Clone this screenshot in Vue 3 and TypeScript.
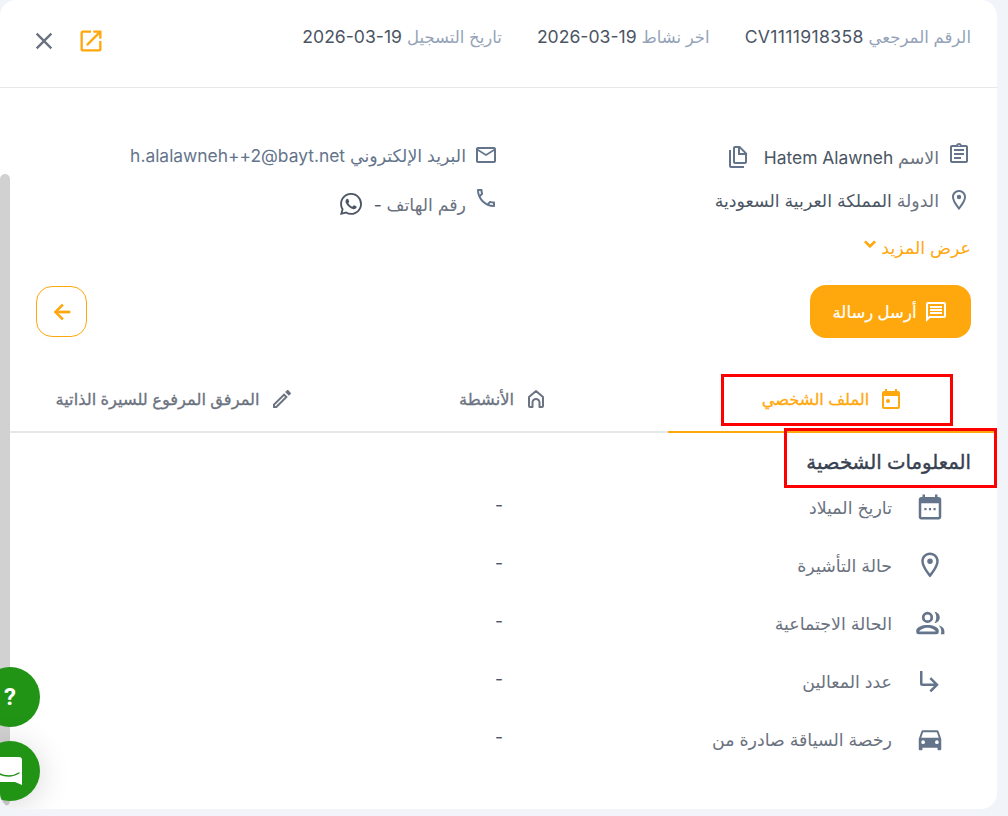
<script setup lang="ts">
interface Row { label: string; icon: string }
const meta = [
  { label: 'الرقم المرجعي', value: 'CV1111918358' },
  { label: 'اخر نشاط', value: '2026-03-19' },
  { label: 'تاريخ التسجيل', value: '2026-03-19' },
]
const rows: Row[] = [
  { label: 'تاريخ الميلاد', icon: 'M19 4h-1V2h-2v2H8V2H6v2H5C3.9 4 3 4.9 3 6v14c0 1.1.9 2 2 2h14c1.100 0 2-.9 2-2V6c0-1.100-.9-2-2-2zm0 16H5V9h14v11zM7.500 12.800h1.700v1.700H7.500zm3.650 0h1.700v1.700h-1.700zm3.650 0h1.700v1.700h-1.700z' },
  { label: 'حالة التأشيرة', icon: 'M12 2C8.130 2 5 5.130 5 9c0 5.250 7 13 7 13s7-7.750 7-13c0-3.870-3.130-7-7-7zM7 9c0-2.760 2.240-5 5-5s5 2.240 5 5c0 2.880-2.880 7.190-5 9.880C9.920 16.210 7 11.850 7 9zm5-2.200a2.200 2.200 0 1 0 0 4.400 2.200 2.200 0 0 0 0-4.400z' },
  { label: 'الحالة الاجتماعية', icon: 'M10 3a4.500 4.500 0 1 0 0 9 4.500 4.500 0 0 0 0-9zm0 2.200a2.300 2.300 0 1 1 0 4.600 2.300 2.300 0 0 1 0-4.600zM10 13.500c-4 0-9 1.600-9 4.500v1a2 2 0 0 0 2 2h14a2 2 0 0 0 2-2v-1c0-2.900-5-4.500-9-4.500zM3.400 18.800c.5-1.300 3.900-3 6.600-3s6.100 1.700 6.600 3zM15.500 3c2.500.2 4.300 2.200 4.300 4.500s-1.800 4.300-4.300 4.500c1-1.200 1.500-2.800 1.500-4.500S16.500 4.200 15.500 3zM19 14c2.500.6 4.500 2 4.500 4.500V21h-3c.3-.5.5-1.300.5-2.500 0-1.800-.8-3.300-2-4.500z' },
  { label: 'عدد المعالين', icon: 'M19 15l-6 6-1.420-1.420L15.170 16H6a2 2 0 0 1-2-2V4h2v10h9.170l-3.590-3.580L13 9l6 6z' },
  { label: 'رخصة السياقة صادرة من', icon: 'M18.920 6.010C18.720 5.420 18.160 5 17.500 5h-11c-.66 0-1.210.42-1.420 1.010L3 12v8c0 .55.45 1 1 1h1c.55 0 1-.45 1-1v-1h12v1c0 .55.45 1 1 1h1c.55 0 1-.45 1-1v-8l-2.080-5.990zM6.500 16a1.500 1.500 0 1 1 0-3 1.500 1.500 0 0 1 0 3zm11 0a1.500 1.500 0 1 1 0-3 1.500 1.500 0 0 1 0 3zM5 11l1.500-4.500h11L19 11H5z' },
]
</script>

<template>
  <div class="page" dir="rtl">
    <main class="card">
      <header class="top">
        <div class="meta">
          <span v-for="m in meta" :key="m.label"><span class="meta-l">{{ m.label }}</span> <bdi class="meta-v" dir="ltr">{{ m.value }}</bdi></span>
        </div>
        <div class="top-actions">
          <svg class="i-open" viewBox="0 0 24 24"><path d="M19 19H5V5h7V3H5c-1.11 0-2 .9-2 2v14c0 1.1.89 2 2 2h14c1.1 0 2-.9 2-2v-7h-2v7zM14 3v2h3.59l-9.83 9.83 1.41 1.41L19 6.41V10h2V3h-7z"/></svg>
          <svg class="i-close" viewBox="0 0 24 24"><path d="M19 6.41 17.59 5 12 10.59 6.41 5 5 6.41 10.59 12 5 17.59 6.41 19 12 13.41 17.59 19 19 17.59 13.41 12z"/></svg>
        </div>
      </header>

      <div class="scroller">
        <div class="content">
          <section class="info">
            <div class="info-col first">
              <div class="info-row">
                <svg class="ic raise" viewBox="0 0 24 24"><path d="M19 3h-4.18C14.4 1.84 13.3 1 12 1s-2.4.84-2.82 2H5c-1.1 0-2 .9-2 2v14c0 1.1.9 2 2 2h14c1.1 0 2-.9 2-2V5c0-1.1-.9-2-2-2zm-7-.25c.41 0 .75.34.75.75s-.34.75-.75.75-.75-.34-.75-.75.34-.75.75-.75zM19 19H5V5h14v14zM7 15h7v2H7zm0-4h10v2H7zm0-4h10v2H7z"/></svg>
                <span class="txt"><span class="lbl">الاسم</span> Hatem Alawneh</span>
                <svg class="ic copy" viewBox="0 0 24 24"><path d="M3 5v16c0 1.100.9 2 2 2h13v-2H5V5H3z"/><path d="M14 1H9c-1.100 0-2 .9-2 2v14c0 1.100.9 2 2 2h10c1.100 0 2-.9 2-2V8l-7-7zm0 2.800L18.200 8H14V3.800zM9 17V3h3v7h7v7H9z"/></svg>
              </div>
              <div class="info-row">
                <svg class="ic" viewBox="0 0 24 24"><path d="M12 2C8.13 2 5 5.13 5 9c0 5.25 7 13 7 13s7-7.75 7-13c0-3.87-3.13-7-7-7zM7 9c0-2.76 2.24-5 5-5s5 2.24 5 5c0 2.88-2.88 7.19-5 9.88C9.92 16.21 7 11.85 7 9zm5-2.2a2.200 2.200 0 1 0 0 4.400 2.200 2.200 0 0 0 0-4.400z"/></svg>
                <span class="txt"><span class="lbl">الدولة</span> المملكة العربية السعودية</span>
              </div>
            </div>
            <div class="info-col second">
              <div class="info-row">
                <svg class="ic" viewBox="0 0 24 24"><path d="M20 4H4c-1.1 0-1.99.9-1.99 2L2 18c0 1.1.9 2 2 2h16c1.1 0 2-.9 2-2V6c0-1.1-.9-2-2-2zm0 14H4V8l8 5 8-5v10zm-8-7L4 6h16l-8 5z"/></svg>
                <span class="txt blue-t"><span class="lbl-b">البريد الإلكتروني</span> h.alalawneh++2@bayt.net</span>
              </div>
              <div class="info-row">
                <svg class="ic phone" viewBox="0 0 24 24"><path d="M6.54 5c.06.89.21 1.76.45 2.59l-1.2 1.2c-.41-1.2-.67-2.47-.76-3.79h1.51m9.86 12.02c.85.24 1.72.39 2.6.45v1.49c-1.32-.09-2.59-.35-3.8-.75l1.2-1.19M7.5 3H4c-.55 0-1 .45-1 1 0 9.39 7.61 17 17 17 .55 0 1-.45 1-1v-3.49c0-.55-.45-1-1-1-1.24 0-2.45-.2-3.57-.57-.1-.04-.21-.05-.31-.05-.26 0-.51.1-.71.29l-2.2 2.2c-2.83-1.45-5.15-3.76-6.59-6.59l2.2-2.2c.28-.28.36-.67.25-1.02C8.7 6.45 8.5 5.25 8.5 4c0-.55-.45-1-1-1z"/></svg>
                <span class="txt"><span class="lbl">رقم الهاتف</span> -</span>
                <svg class="ic wa" viewBox="0 0 24 24"><path d="M17.472 14.382c-.297-.149-1.758-.867-2.03-.967-.273-.099-.471-.148-.67.15-.197.297-.767.966-.94 1.164-.173.199-.347.223-.644.075-.297-.15-1.255-.463-2.39-1.475-.883-.788-1.48-1.761-1.653-2.059-.173-.297-.018-.458.13-.606.134-.133.298-.347.446-.52.149-.174.198-.298.298-.497.099-.198.05-.371-.025-.52-.075-.149-.669-1.612-.916-2.207-.242-.579-.487-.5-.669-.51-.173-.008-.371-.01-.57-.01-.198 0-.52.074-.792.372-.272.297-1.04 1.016-1.04 2.479 0 1.462 1.065 2.875 1.213 3.074.149.198 2.096 3.2 5.077 4.487.709.306 1.262.489 1.694.625.712.227 1.36.195 1.871.118.571-.085 1.758-.719 2.006-1.413.248-.694.248-1.289.173-1.413-.074-.124-.272-.198-.57-.347m-5.421 7.403h-.004a9.87 9.87 0 01-5.031-1.378l-.361-.214-3.741.982.998-3.648-.235-.374a9.86 9.86 0 01-1.51-5.26c.001-5.45 4.436-9.884 9.888-9.884 2.64 0 5.122 1.03 6.988 2.898a9.825 9.825 0 012.893 6.994c-.003 5.45-4.437 9.884-9.885 9.884m8.413-18.297A11.815 11.815 0 0012.05 0C5.495 0 .16 5.335.157 11.892c0 2.096.547 4.142 1.588 5.945L.057 24l6.305-1.654a11.882 11.882 0 005.683 1.448h.005c6.554 0 11.89-5.335 11.893-11.893a11.821 11.821 0 00-3.48-8.413z"/></svg>
              </div>
            </div>
          </section>

          <div class="more">عرض المزيد <svg viewBox="0 0 24 24"><path d="M16.59 8.59 12 13.17 7.41 8.59 6 10l6 6 6-6z"/></svg></div>

          <div class="actions">
            <button class="send" type="button">
              <svg viewBox="0 0 24 24"><path d="M20 2H4c-1.1 0-2 .9-2 2v18l4-4h14c1.1 0 2-.9 2-2V4c0-1.1-.9-2-2-2zm0 14H5.17L4 17.17V4h16v12zM6 12h12v2H6zm0-3h12v2H6zm0-3h12v2H6z"/></svg>
              أرسل رسالة
            </button>
            <button class="back" type="button" aria-label="back">
              <svg viewBox="0 0 24 24"><path d="M20 11H7.83l5.59-5.59L12 4l-8 8 8 8 1.41-1.41L7.83 13H20v-2z"/></svg>
            </button>
          </div>

          <nav class="tabs">
            <div class="tab active">
              <span class="mark mark-tab"></span>
              <svg viewBox="0 0 24 24"><path d="M19 4h-1V2h-2v2H8V2H6v2H5C3.9 4 3 4.9 3 6v14c0 1.1.9 2 2 2h14c1.1 0 2-.9 2-2V6c0-1.1-.9-2-2-2zm0 16H5V9h14v11zM9 12a2 2 0 1 0 0 4 2 2 0 0 0 0-4z"/></svg>
              الملف الشخصي
            </div>
            <div class="tab">
              <svg viewBox="0 0 24 24"><path class="line" d="M5 10l7-6 7 6v9a1 1 0 0 1-1 1h-2.500v-4.500a3.500 3.500 0 0 0-7 0V20H6a1 1 0 0 1-1-1z"/></svg>
              الأنشطة
            </div>
            <div class="tab">
              <svg viewBox="0 0 24 24"><path d="M3 17.25V21h3.75L17.81 9.94l-3.75-3.75L3 17.25zM5.92 19H5v-.92l9.06-9.06.92.92L5.92 19zM20.71 7.04c.39-.39.39-1.02 0-1.41l-2.34-2.34c-.39-.39-1.02-.39-1.41 0l-1.83 1.83 3.75 3.75 1.83-1.83z"/></svg>
              المرفق المرفوع للسيرة الذاتية
            </div>
          </nav>

          <section class="personal">
            <h2 class="heading"><span class="mark mark-head"></span>المعلومات الشخصية</h2>
            <div v-for="r in rows" :key="r.label" class="row">
              <svg class="row-ic" viewBox="0 0 24 24"><path fill-rule="evenodd" :d="r.icon"/></svg>
              <span class="row-l">{{ r.label }}</span>
              <span class="row-v">-</span>
            </div>
          </section>
        </div>
        <div class="bar"><div class="thumb"></div></div>
      </div>
      <button class="fab help" type="button">?</button>
      <button class="fab chat" type="button" aria-label="chat">
        <svg viewBox="0 0 32 32"><path d="M-2 2H25a3 3 0 0 1 3 3V30l-7-3H-2z" fill="#fff"/><path d="M4 18c6 4 15 4 21 0" fill="none" stroke="#219315" stroke-width="1.4" stroke-linecap="round"/></svg>
      </button>
    </main>
  </div>
</template>

<style>
html, body { margin: 0; background: #f1f5f9; }
</style>

<style scoped>
.page {
  width: 1008px;
  height: 816px;
  overflow: hidden;
  background: #f1f5f9;
  font-family: Inter, "Noto Sans", "DejaVu Sans", sans-serif;
  font-size: 17.4px;
  color: #4b5563;
  direction: rtl;
}
.card {
  position: relative;
  width: 997px;
  height: 809px;
  margin-right: auto;
  background: #fff;
  border-radius: 16px;
  overflow: hidden;
  display: flex;
  flex-direction: column;
}
.top {
  height: 88px;
  box-sizing: border-box;
  border-bottom: 1px solid #e5e7eb;
  padding: 0 26px 0 30px;
  display: flex;
  justify-content: space-between;
}
.meta { display: flex; gap: 35px; padding-top: 26px; line-height: 22px; font-size: 17.6px; }
.meta-l { color: #94a3b8; font-size: 16.5px; }
.meta-v { color: #4b5563; }
.meta > span:first-child .meta-v { letter-spacing: 0.33px; }
.top-actions { display: flex; align-items: center; gap: 19px; padding-bottom: 6px; }
.top-actions svg { width: 28px; height: 28px; }
.i-open { fill: #ffa80d; }
.i-close { fill: #6b7280; }
.scroller { flex: 1; display: flex; min-height: 0; }
.content { flex: 1; min-width: 0; }
.bar { width: 10px; flex: none; }
.thumb { margin-top: 86px; height: 632px; background: #d1d1d1; border-radius: 5px; }
.info { padding: 55px 26px 0; display: flex; }
.info-col { width: 473px; display: flex; flex-direction: column; gap: 21px; }
.first { padding-top: 2px; gap: 19px; }
.second { flex: 1; }
.second .info-row + .info-row { margin-top: 4px; }
.info-row { display: flex; align-items: center; gap: 8px; height: 24px; }
.ic { width: 24px; height: 24px; fill: #64748b; flex: none; }
.raise { margin-top: -6px; }
.phone { margin-top: -12px; }
.copy { margin-right: 6px; }
.wa { width: 22px; height: 22px; margin-right: 4px; fill: #4b5563; }
.txt { color: #4b5563; }
.lbl { color: #6b7280; }
.lbl-b, .blue-t { color: #64748b; }
.more {
  margin-top: 20px;
  padding: 0 26px;
  color: #ffa80d;
  display: flex;
  align-items: center;
  gap: 0;
  line-height: 24px;
}
.more svg { width: 22px; height: 22px; fill: #ffa80d; stroke: #ffa80d; stroke-width: 1; margin-top: -8px; }
.actions {
  margin-top: 25px;
  padding: 0 26px;
  display: flex;
  justify-content: space-between;
  align-items: center;
}
button { font-family: inherit; cursor: pointer; }
.send {
  width: 161px;
  height: 53px;
  padding: 0;
  border: 0;
  border-radius: 16px;
  background: #ffa80d;
  color: #fff;
  font-size: 16.5px;
  font-weight: 500;
  display: flex;
  align-items: center;
  justify-content: center;
  gap: 8px;
  -webkit-text-stroke: 0.2px currentColor;
}
.send svg { width: 24px; height: 24px; fill: #fff; }
.back {
  width: 51px;
  height: 51px;
  padding: 0;
  background: #fff;
  border: 1px solid #ffa80d;
  border-radius: 16px;
  display: flex;
  align-items: center;
  justify-content: center;
}
.back svg { width: 24px; height: 24px; fill: #ffa80d; stroke: #ffa80d; stroke-width: 0.7; }
.tabs {
  margin-top: 29px;
  display: grid;
  grid-template-columns: repeat(3, 1fr);
  border-bottom: 2px solid #e5e7eb;
}
.tab {
  position: relative;
  height: 66px;
  margin-bottom: -2px;
  box-sizing: border-box;
  border-bottom: 2px solid transparent;
  display: flex;
  align-items: center;
  justify-content: center;
  gap: 10px;
  font-weight: 500;
  font-size: 16.3px;
  color: #6b7280;
  -webkit-text-stroke: 0.3px currentColor;
}
.tab svg { width: 24px; height: 24px; fill: #6b7280; }
.tab .line { fill: none; stroke: #6b7280; stroke-width: 2; stroke-linejoin: round; }
.tab.active { color: #ffa80d; border-bottom-color: #ffa80d; }
.tab.active svg { fill: #ffa80d; }
.mark { position: absolute; border: 3px solid #fe0000; box-sizing: border-box; pointer-events: none; }
.mark-tab { left: 53px; top: 7px; width: 232px; height: 52px; }
.mark-head { left: 0; right: 0; top: -5px; height: 60px; }
.personal { padding: 0 26px; }
.heading {
  position: relative;
  margin: 0 -26px 0 0;
  padding: 0 26px 0 0;
  width: 187px;
  height: 45px;
  line-height: 58px;
  font-size: 19.7px;
  font-weight: 500;
  color: #374151;
  white-space: nowrap;
  -webkit-text-stroke: 0.4px currentColor;
}
.row { display: flex; align-items: center; height: 58px; margin-right: 26px; }
.row-ic { width: 30px; height: 30px; fill: #64748b; flex: none; }
.row-l { width: 389px; flex: none; margin-right: 23px; color: #6b7280; }
.row-v { color: #4b5563; margin-top: -6px; }
.fab {
  position: absolute;
  left: -20px;
  width: 60px;
  height: 60px;
  padding: 0;
  border: 0;
  border-radius: 50%;
  background: #219315;
  color: #fff;
}
.help { top: 667px; font-size: 24px; font-weight: 700; font-family: Roboto, sans-serif; }
.chat { top: 741px; box-shadow: 0 4px 32px rgba(0,0,0,.16); display: flex; align-items: center; justify-content: center; }
.chat svg { width: 32px; height: 32px; overflow: visible; }
</style>
